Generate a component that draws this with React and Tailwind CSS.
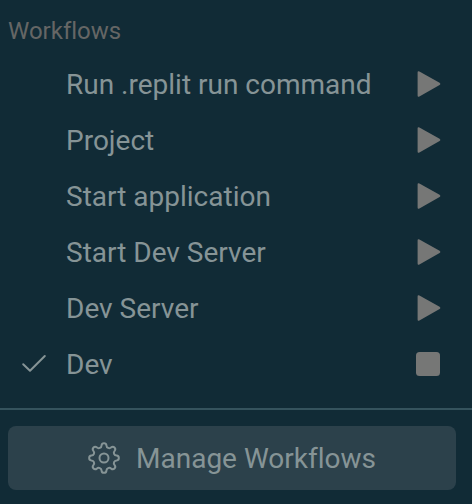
const workflows = [
  { name: "Run .replit run command" },
  { name: "Project" },
  { name: "Start application" },
  { name: "Start Dev Server" },
  { name: "Dev Server" },
  { name: "Dev", running: true },
];

function CheckIcon() {
  return (
    <svg aria-hidden="true" viewBox="0 0 32 32" className="size-8 shrink-0" fill="none" stroke="currentColor" strokeWidth="2" strokeLinecap="round" strokeLinejoin="round">
      <path d="M5.2 16.2 12 22.8 26.8 8" />
    </svg>
  );
}

function PlayIcon() {
  return (
    <svg aria-hidden="true" viewBox="0 0 32 32" className="size-8" fill="currentColor">
      <path d="M5.6 4.5Q5.6 2.6 7.4 3.6L27.6 14.7Q29.4 16 27.6 17.1L7.4 28.4Q5.6 29.3 5.6 27.5Z" />
    </svg>
  );
}

function StopIcon() {
  return (
    <svg aria-hidden="true" viewBox="0 0 32 32" className="size-8" fill="currentColor">
      <rect x="4" y="4" width="24" height="24" rx="3.5" />
    </svg>
  );
}

// Eight rounded teeth joined by shallow valleys.
const gearPath = (() => {
  const at = (deg) => {
    const a = (deg * Math.PI) / 180;
    return `${(16 + 12.8 * Math.cos(a)).toFixed(2)} ${(16 + 12.8 * Math.sin(a)).toFixed(2)}`;
  };
  let d = `M${at(-11)}`;
  for (let k = 0; k < 8; k++) {
    d += `A2.45 2.5 ${k * 45 + 90} 0 1 ${at(k * 45 + 11)}A2.8 2.8 0 0 0 ${at(k * 45 + 34)}`;
  }
  return d + "Z";
})();

function GearIcon() {
  return (
    <svg aria-hidden="true" viewBox="0 0 32 32" className="size-8 shrink-0" fill="none" stroke="currentColor" strokeWidth="2" strokeLinejoin="round">
      <path d={gearPath} />
      <circle cx="16" cy="16" r="4.5" />
    </svg>
  );
}

export default function App() {
  return (
    <main className="min-h-screen bg-[#112b36] pb-3.5 font-[Roboto,'Noto_Sans',sans-serif] text-[#869496] [font-variant-ligatures:none]">
      <h2 className="px-2 pt-[17px] pb-[11px] text-[24px] leading-7 text-[#656665]">Workflows</h2>
      <ul>
        {workflows.map(({ name, running }) => (
          <li key={name} className="flex h-14 items-center pr-7 pl-[18px]">
            <button type="button" className="flex min-w-0 grow items-center gap-4 text-left text-[28px] leading-9">
              {running ? <CheckIcon /> : <span className="size-8 shrink-0" />}
              <span className="pt-0.5 whitespace-nowrap">{name}</span>
            </button>
            <button type="button" aria-label={`${running ? "Stop" : "Run"} ${name}`} className="text-[#767776]">
              {running ? <StopIcon /> : <PlayIcon />}
            </button>
          </li>
        ))}
      </ul>
      <div className="mt-4 border-t-2 border-[#35535d] px-2 pt-4 pr-4">
        <button type="button" className="flex h-16 w-full items-center justify-center gap-4 rounded-lg bg-[#2c414b] text-[28px] leading-9">
          <GearIcon />
          <span className="pt-0.5">Manage Workflows</span>
        </button>
      </div>
    </main>
  );
}
